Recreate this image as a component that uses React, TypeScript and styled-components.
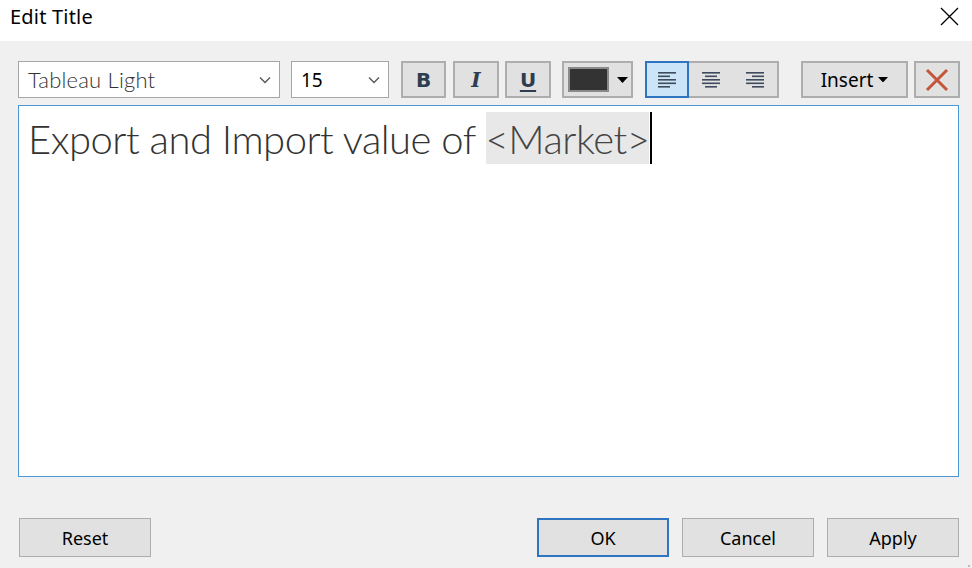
import React from "react";
import styled, { createGlobalStyle } from "styled-components";

const Global = createGlobalStyle`
  html, body { margin: 0; padding: 0; background: #f0f0f0; }
  body { font-family: "Noto Sans", "Open Sans", sans-serif; }
  * { box-sizing: border-box; }
`;

const Dialog = styled.div`
  width: 972px;
  height: 568px;
  background: #f0f0f0;
  display: flex;
  flex-direction: column;
  position: relative;
  overflow: hidden;
`;

const TitleBar = styled.div`
  height: 41px;
  background: #ffffff;
  display: flex;
  align-items: center;
  justify-content: space-between;
  padding: 0 13px 8px 10px;
`;

const TitleText = styled.span`
  font-family: "Noto Sans", sans-serif;
  font-size: 20px;
  color: #000;
  letter-spacing: 0.2px;
`;

const CloseBtn = styled.div`
  width: 19px;
  height: 19px;
  display: flex;
  align-items: center;
  justify-content: center;
`;

const Toolbar = styled.div`
  display: flex;
  align-items: center;
  height: 37px;
  margin: 20px 0 0 18px;
`;

const Select = styled.div<{ $w: number; $ml?: number }>`
  width: ${(p) => p.$w}px;
  margin-left: ${(p) => p.$ml ?? 0}px;
  height: 37px;
  background: #fff;
  border: 1px solid #a6a6a6;
  display: flex;
  align-items: center;
  justify-content: space-between;
  padding: 0 8px 0 9px;
`;

const SelectText = styled.span<{ $tableau?: boolean }>`
  font-family: ${(p) => (p.$tableau ? '"Lato", sans-serif' : '"Noto Sans", sans-serif')};
  font-weight: ${(p) => (p.$tableau ? 300 : 400)};
  font-size: ${(p) => (p.$tableau ? 22 : 19)}px;
  color: ${(p) => (p.$tableau ? "#333" : "#000")};
  letter-spacing: ${(p) => (p.$tableau ? "0.2px" : "0")};
`;

const ToolBtn = styled.div<{ $w: number; $ml: number }>`
  width: ${(p) => p.$w}px;
  margin-left: ${(p) => p.$ml}px;
  height: 37px;
  background: #e1e1e1;
  border: 2px solid #adadad;
  display: flex;
  align-items: center;
  justify-content: center;
  color: #2e3d4f;
`;

const StyleGlyph = styled.span<{ $italic?: boolean; $underline?: boolean }>`
  font-family: ${(p) => (p.$italic ? '"DejaVu Serif", serif' : '"DejaVu Sans", sans-serif')};
  font-weight: 700;
  font-size: ${(p) => (p.$italic ? 20 : 20)}px;
  font-style: ${(p) => (p.$italic ? "italic" : "normal")};
  text-decoration: ${(p) => (p.$underline ? "underline" : "none")};
  text-decoration-thickness: 2px;
  text-underline-offset: 3px;
  color: #2e3d4f;
`;

const Swatch = styled.div`
  width: 41px;
  height: 25px;
  background: #333333;
  border: 2px solid #8a8a8a;
  margin-right: 8px;
`;

const AlignGroup = styled.div`
  display: flex;
  margin-left: 12px;
  height: 37px;
  background: #e1e1e1;
  border: 2px solid #adadad;
`;

const AlignBtn = styled.div<{ $active?: boolean }>`
  width: 44px;
  display: flex;
  align-items: center;
  justify-content: center;
  background: ${(p) => (p.$active ? "#cce4f7" : "transparent")};
  margin: ${(p) => (p.$active ? "-2px 0 -2px -2px" : "0")};
  border: ${(p) => (p.$active ? "2px solid #2f74c0" : "none")};
`;

const InsertLabel = styled.span`
  font-family: "Noto Sans", sans-serif;
  font-size: 19px;
  color: #000;
  display: flex;
  align-items: center;
  gap: 5px;
`;

const Editor = styled.div`
  margin: 7px 0 0 18px;
  width: 941px;
  height: 372px;
  background: #fff;
  border: 1px solid #4a98d8;
  padding: 7px 0 0 9px;
`;

const TitleLine = styled.div`
  font-family: "Lato", sans-serif;
  font-weight: 300;
  font-size: 40px;
  line-height: 49px;
  letter-spacing: -0.5px;
  color: #333;
  display: flex;
  align-items: stretch;
  white-space: pre;
`;

const Field = styled.span`
  background: #e8e8e8;
  color: #444;
  padding-top: 3px;
  margin-top: -1px;
`;

const Plain = styled.span`
  padding-top: 2px;
`;

const Caret = styled.span`
  width: 2px;
  background: #000;
  margin: -1px 0 0 1px;
`;

const Footer = styled.div`
  display: flex;
  align-items: center;
  margin-top: 41px;
  padding-left: 19px;
`;

const DlgBtn = styled.div<{ $ml: number; $primary?: boolean }>`
  width: 132px;
  height: 39px;
  margin-left: ${(p) => p.$ml}px;
  background: #e1e1e1;
  border: ${(p) => (p.$primary ? "2px solid #2f74c0" : "1px solid #adadad")};
  display: flex;
  align-items: center;
  justify-content: center;
  font-family: "Noto Sans", sans-serif;
  font-size: 18px;
  color: #000;
`;

const Grip = styled.div`
  position: absolute;
  right: 1px;
  bottom: 1px;
  width: 10px;
  height: 10px;
`;

const Chevron = () => (
  <svg width="12" height="8" viewBox="0 0 12 8">
    <path d="M1 1.5 L6 6.5 L11 1.5" stroke="#555" strokeWidth="1.3" fill="none" />
  </svg>
);

const Caretdown = ({ w = 11 }: { w?: number }) => (
  <svg width={w} height={w / 2 + 0.5} viewBox="0 0 11 6">
    <path d="M0 0 H11 L5.5 6 Z" fill="#000" />
  </svg>
);

const AlignIcon = ({ mode }: { mode: "left" | "center" | "right" }) => {
  const rows = [18, 12, 18, 18, 12];
  return (
    <svg width="18" height="16" viewBox="0 0 18 16">
      {rows.map((w, i) => {
        const x = mode === "left" ? 0 : mode === "right" ? 18 - w : (18 - w) / 2;
        return <rect key={i} x={x} y={i * 3.5} width={w} height="1.6" fill="#3d4b5c" />;
      })}
    </svg>
  );
};

export default function App() {
  return (
    <Dialog>
      <Global />
      <TitleBar>
        <TitleText>Edit Title</TitleText>
        <CloseBtn>
          <svg width="19" height="19" viewBox="0 0 19 19">
            <path d="M1 1 L18 18 M18 1 L1 18" stroke="#000" strokeWidth="1.3" />
          </svg>
        </CloseBtn>
      </TitleBar>
      <Toolbar>
        <Select $w={262}>
          <SelectText $tableau>Tableau Light</SelectText>
          <Chevron />
        </Select>
        <Select $w={98} $ml={11}>
          <SelectText>15</SelectText>
          <Chevron />
        </Select>
        <ToolBtn $w={45} $ml={12}>
          <StyleGlyph>B</StyleGlyph>
        </ToolBtn>
        <ToolBtn $w={46} $ml={7}>
          <StyleGlyph $italic>I</StyleGlyph>
        </ToolBtn>
        <ToolBtn $w={46} $ml={6}>
          <StyleGlyph $underline>U</StyleGlyph>
        </ToolBtn>
        <ToolBtn $w={71} $ml={11}>
          <Swatch />
          <Caretdown />
        </ToolBtn>
        <AlignGroup>
          <AlignBtn $active>
            <AlignIcon mode="left" />
          </AlignBtn>
          <AlignBtn>
            <AlignIcon mode="center" />
          </AlignBtn>
          <AlignBtn>
            <AlignIcon mode="right" />
          </AlignBtn>
        </AlignGroup>
        <ToolBtn $w={107} $ml={22}>
          <InsertLabel>
            Insert
            <Caretdown w={10} />
          </InsertLabel>
        </ToolBtn>
        <ToolBtn $w={46} $ml={6}>
          <svg width="24" height="24" viewBox="0 0 24 24">
            <path d="M2 2 L22 22 M22 2 L2 22" stroke="#c4553b" strokeWidth="3" />
          </svg>
        </ToolBtn>
      </Toolbar>
      <Editor>
        <TitleLine>
          <Plain>Export and Import value of </Plain>
          <Field>&lt;Market&gt;</Field>
          <Caret />
        </TitleLine>
      </Editor>
      <Footer>
        <DlgBtn $ml={0}>Reset</DlgBtn>
        <DlgBtn $ml={386} $primary>OK</DlgBtn>
        <DlgBtn $ml={13}>Cancel</DlgBtn>
        <DlgBtn $ml={13}>Apply</DlgBtn>
      </Footer>
      <Grip>
        <svg width="10" height="10" viewBox="0 0 10 10">
          <rect x="7" y="1" width="2" height="2" fill="#bbb" />
          <rect x="4" y="4" width="2" height="2" fill="#bbb" />
          <rect x="7" y="4" width="2" height="2" fill="#bbb" />
          <rect x="1" y="7" width="2" height="2" fill="#bbb" />
          <rect x="4" y="7" width="2" height="2" fill="#bbb" />
          <rect x="7" y="7" width="2" height="2" fill="#bbb" />
        </svg>
      </Grip>
    </Dialog>
  );
}
